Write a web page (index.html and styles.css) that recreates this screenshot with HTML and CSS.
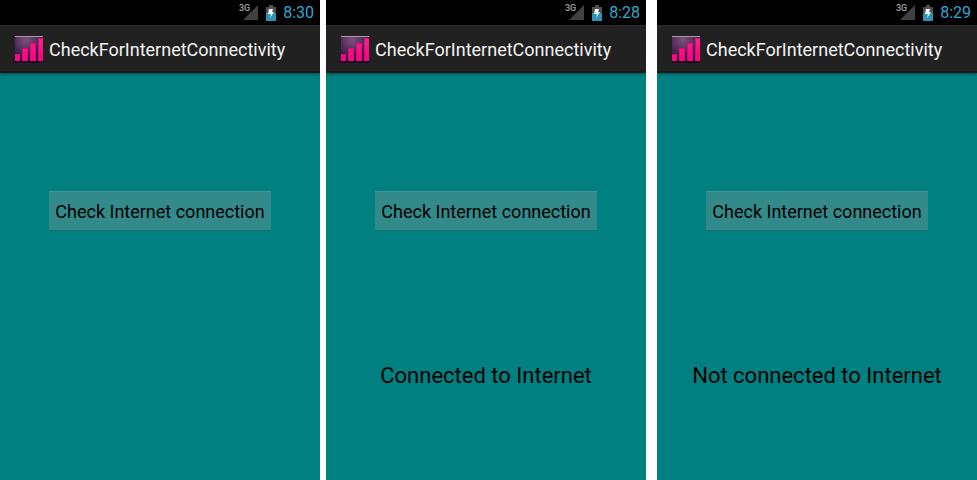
FILE: index.html
```html
<!DOCTYPE html>
<html lang="en">
<head>
<meta charset="utf-8">
<title>CheckForInternetConnectivity</title>
<link rel="stylesheet" href="styles.css">
</head>
<body>
<svg class="defs" aria-hidden="true">
  <defs>
    <radialGradient id="glow" cx="0.4" cy="0.15" r="0.75">
      <stop offset="0" stop-color="#7d5080"/>
      <stop offset="0.5" stop-color="#56305a"/>
      <stop offset="1" stop-color="#32123a"/>
    </radialGradient>
    <linearGradient id="level" x1="0" y1="0" x2="0" y2="1">
      <stop offset="0" stop-color="#f5218c"/>
      <stop offset="1" stop-color="#ff0080"/>
    </linearGradient>
    <symbol id="app" viewBox="0 0 28 28">
      <rect width="28" height="26" fill="url(#glow)"/>
      <rect width="28" height="1" fill="#a99bab"/>
      <rect y="25" width="28" height="2" fill="#1f0a20"/>
      <path d="M0 18h5v7H0zM7 12h6v13H7zM15 7h6v18h-6zM23 2h5v23h-5z" fill="#d80c78"/>
      <path d="M0 19h4v6H0zM8 13h4v12H8zM16 8h4v17h-4zM24 3h4v22h-4z" fill="url(#level)"/>
    </symbol>
    <symbol id="signal" viewBox="0 0 20 18">
      <path d="M19 1v15H4z" fill="#404040"/>
      <text class="network" x="0" y="7">3G</text>
    </symbol>
    <symbol id="battery" viewBox="0 0 10 16">
      <path d="M3 0h4v2h3v6H0V2h3z" fill="#505050"/>
      <path d="M0 8h10v8H0z" fill="#2f93b8"/>
      <path d="M3 4h4L6 7h2l-4 6 1-4H2z" fill="#f4fbff"/>
    </symbol>
  </defs>
</svg>
<main class="screens">
  <section class="screen">
    <div class="status">
      <svg class="signal"><use href="#signal"/></svg>
      <svg class="battery"><use href="#battery"/></svg>
      <time>8:30</time>
    </div>
    <header class="bar">
      <svg class="app"><use href="#app"/></svg>
      <h1>CheckForInternetConnectivity</h1>
    </header>
    <div class="content">
      <button type="button">Check Internet connection</button>
    </div>
  </section>
  <section class="screen second">
    <div class="status">
      <svg class="signal"><use href="#signal"/></svg>
      <svg class="battery"><use href="#battery"/></svg>
      <time>8:28</time>
    </div>
    <header class="bar">
      <svg class="app"><use href="#app"/></svg>
      <h1>CheckForInternetConnectivity</h1>
    </header>
    <div class="content">
      <button type="button">Check Internet connection</button>
      <p>Connected to Internet</p>
    </div>
  </section>
  <section class="screen third">
    <div class="status">
      <svg class="signal"><use href="#signal"/></svg>
      <svg class="battery"><use href="#battery"/></svg>
      <time>8:29</time>
    </div>
    <header class="bar">
      <svg class="app"><use href="#app"/></svg>
      <h1>CheckForInternetConnectivity</h1>
    </header>
    <div class="content">
      <button type="button">Check Internet connection</button>
      <p>Not connected to Internet</p>
    </div>
  </section>
</main>
</body>
</html>
```
FILE: styles.css
```css
* {
  box-sizing: border-box;
}

body {
  margin: 0;
  background: #fff;
  font-family: Roboto, "Liberation Sans", sans-serif;
}

.defs {
  position: absolute;
  width: 0;
  height: 0;
}

.screens {
  display: flex;
  min-height: 100vh;
}

.screen {
  flex: 1 1 0;
  min-width: 0;
  display: flex;
  flex-direction: column;
  background: #008080;
}

.second {
  margin-left: 6px;
}

.third {
  margin-left: 11px;
}

.status {
  display: flex;
  align-items: center;
  justify-content: flex-end;
  height: 25px;
  padding-right: 6px;
  background: #000;
  color: #33a5d2;
  font-size: 16px;
  line-height: 24px;
}

.signal {
  width: 20px;
  height: 18px;
  margin-right: 7px;
}

.battery {
  width: 10px;
  height: 16px;
  margin-right: 7px;
}

.network {
  font-size: 9px;
  font-weight: 500;
  fill: #a0a0a0;
}

.bar {
  display: flex;
  align-items: center;
  gap: 6px;
  height: 48px;
  padding: 2px 0 0 15px;
  background: #212121;
  border-top: 1px solid #2b2b2b;
  border-bottom: 2px solid #181818;
  box-shadow: 0 1px 3px rgba(0, 0, 0, 0.4);
  clip-path: inset(0 0 -6px 0);
}

.app {
  width: 28px;
  height: 28px;
}

h1 {
  margin: 0;
  color: #f3f3f3;
  font-size: 18px;
  font-weight: 400;
  line-height: 24px;
}

.content {
  display: flex;
  flex-direction: column;
  align-items: center;
  padding-top: 118px;
}

button {
  height: 40px;
  padding: 2px 6px 0;
  border: 0;
  border-top: 1px solid #479494;
  border-bottom: 1px solid #1c7070;
  background: #338a8a;
  color: #000;
  font-family: inherit;
  font-size: 18px;
  line-height: 24px;
}

p {
  margin: 129px 0 0;
  color: #000;
  font-size: 22px;
  line-height: 32px;
}
```
